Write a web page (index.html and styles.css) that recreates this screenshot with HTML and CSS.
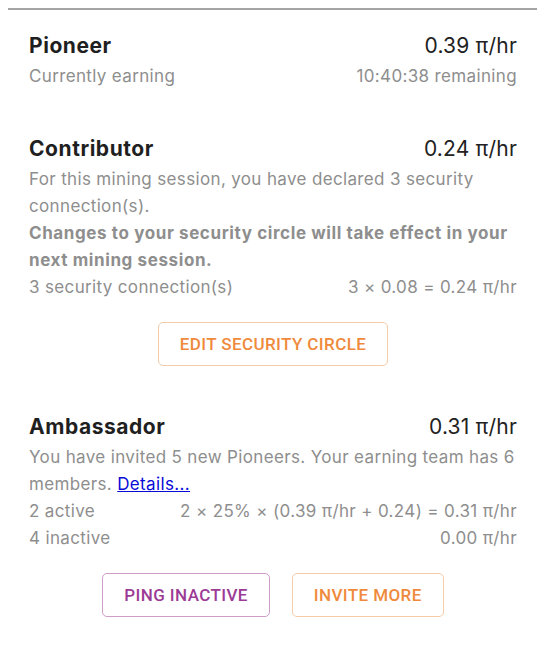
FILE: index.html
```html
<!DOCTYPE html>
<html lang="en">
<head>
<meta charset="utf-8">
<title>Mining rate</title>
<link rel="stylesheet" href="styles.css">
</head>
<body>
<div class="card">
  <section class="section">
    <div class="row title-row">
      <span class="title">Pioneer</span>
      <span class="rate">0.39 π/hr</span>
    </div>
    <div class="row muted">
      <span>Currently earning</span>
      <span>10:40:38 remaining</span>
    </div>
  </section>

  <section class="section">
    <div class="row title-row">
      <span class="title">Contributor</span>
      <span class="rate">0.24 π/hr</span>
    </div>
    <p class="text muted">For this mining session, you have declared 3 security connection(s).</p>
    <p class="text muted strong">Changes to your security circle will take effect in your next mining session.</p>
    <div class="row muted">
      <span>3 security connection(s)</span>
      <span>3 × 0.08 = 0.24 π/hr</span>
    </div>
    <div class="actions">
      <button class="btn btn-orange" type="button">EDIT SECURITY CIRCLE</button>
    </div>
  </section>

  <section class="section">
    <div class="row title-row">
      <span class="title">Ambassador</span>
      <span class="rate">0.31 π/hr</span>
    </div>
    <p class="text muted"><span>You have invited 5 new Pioneers. Your earning team has 6</span> <span>members.</span> <a href="#" class="link">Details...</a></p>
    <div class="row muted">
      <span>2 active</span>
      <span>2 × 25% × (0.39 π/hr + 0.24) = 0.31 π/hr</span>
    </div>
    <div class="row muted">
      <span>4 inactive</span>
      <span>0.00 π/hr</span>
    </div>
    <div class="actions">
      <button class="btn btn-purple" type="button">PING INACTIVE</button>
      <button class="btn btn-orange" type="button">INVITE MORE</button>
    </div>
  </section>
</div>
</body>
</html>
```

FILE: styles.css
```css
html, body {
  margin: 0;
  padding: 0;
  background: #ffffff;
}

body {
  padding-top: 8px;
  font-family: Inter, "Liberation Sans", sans-serif;
  color: #222222;
}

.card {
  margin: 0 18px 0 8px;
  border-top: 2px solid #a4a4a4;
  padding: 19px 20px 30px 21px;
}

.section {
  display: flex;
  flex-direction: column;
}

.section + .section {
  margin-top: 42px;
}

.row {
  display: flex;
  justify-content: space-between;
  align-items: baseline;
  font-size: 17px;
  line-height: 27px;
  letter-spacing: 0.35px;
}

.title-row {
  font-size: 21px;
  line-height: 34px;
  letter-spacing: 0.2px;
}

.title {
  font-weight: 700;
  color: #1f1f1f;
  letter-spacing: 0.55px;
}

.rate {
  color: #222222;
}

.muted {
  color: #8e8e8e;
}

.text {
  margin: 0;
  font-size: 17px;
  line-height: 27px;
  letter-spacing: 0.35px;
}

.strong {
  font-weight: 700;
  letter-spacing: 0.6px;
}

.link {
  color: #0a0ad8;
  text-decoration: underline;
}

.actions {
  display: flex;
  justify-content: center;
  gap: 22px;
  margin-top: 21px;
  margin-bottom: 2px;
}

.btn {
  height: 44px;
  padding: 0 21px;
  background: #ffffff;
  border-radius: 5px;
  font-family: Roboto, "Liberation Sans", sans-serif;
  font-weight: 500;
  font-size: 17px;
  letter-spacing: 0.4px;
  cursor: pointer;
}

.btn-orange {
  color: #ef8a3c;
  border: 1px solid #f6cba8;
}

.btn-purple {
  color: #9c3b96;
  border: 1px solid #cc9dc9;
}
```
